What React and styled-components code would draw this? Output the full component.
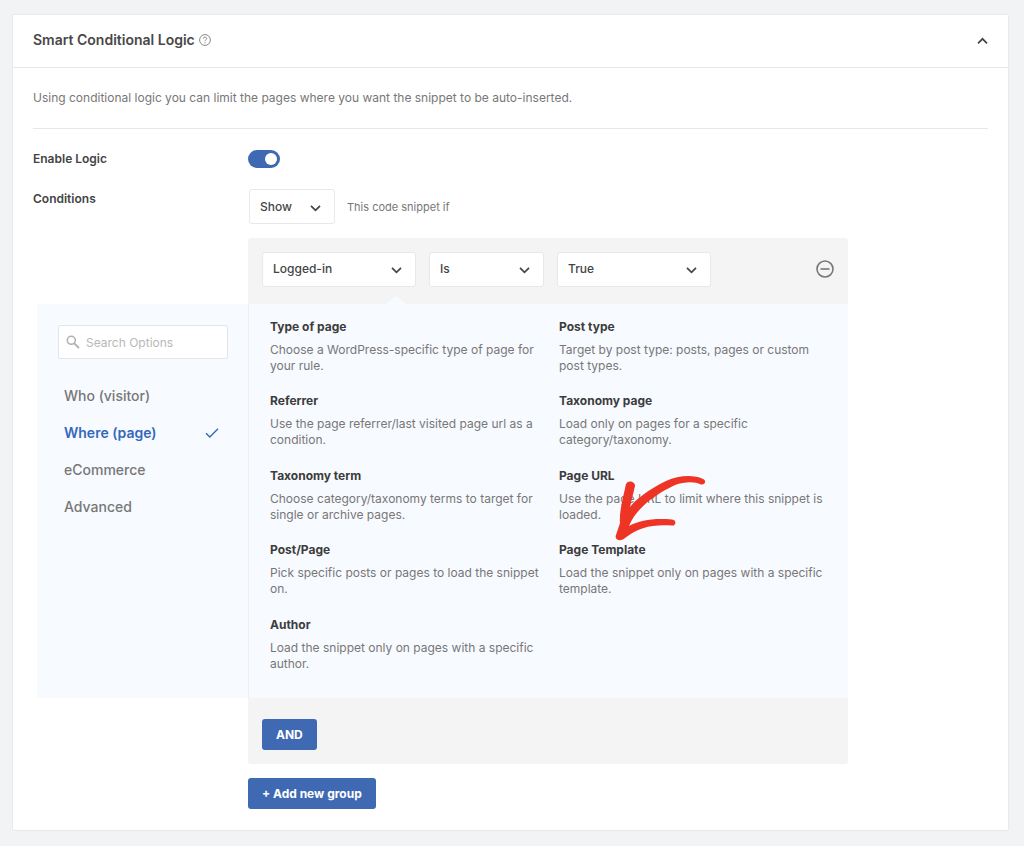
import React, { useState } from 'react'
import styled, { createGlobalStyle } from 'styled-components'

const GlobalStyle = createGlobalStyle`
  * {
    box-sizing: border-box;
  }
  body {
    margin: 0;
    background-color: #f1f3f5;
    font-family: Inter, 'Liberation Sans', sans-serif;
    font-size: 12px;
    color: #777;
  }
  button,
  input,
  select {
    font-family: inherit;
    margin: 0;
  }
`
const Page = styled.main`
  padding: 14px 15px 15px 12px;
`
const Card = styled.section`
  background-color: white;
  border: 1px solid #e7e9eb;
  border-radius: 2px;
`
const CardHeader = styled.header`
  display: flex;
  align-items: center;
  justify-content: space-between;
  height: 53px;
  padding: 0 20px;
  border-bottom: 1px solid #e6e8ea;
`
const TitleWrap = styled.div`
  display: flex;
  align-items: center;
  gap: 4px;
  padding-bottom: 2px;
`
const Title = styled.h2`
  margin: 0;
  font-size: 14px;
  line-height: 20px;
  font-weight: 600;
  color: #484848;
`
const IconButton = styled.button`
  display: flex;
  padding: 0;
  border: none;
  background: none;
  color: ${(props) => props.$color || '#444'};
  cursor: pointer;
`
const CardBody = styled.div`
  padding: 20px 20px 21px;
`
const Intro = styled.p`
  margin: 0 0 20px;
  padding-bottom: 20px;
  line-height: 20px;
  border-bottom: 1px solid #e6e8ea;
`
const SettingsGrid = styled.div`
  display: grid;
  grid-template-columns: 215px minmax(0, 600px);
`
const Label = styled.label`
  line-height: 20px;
  font-weight: 600;
  color: #444;
`
const ToggleCell = styled.div`
  display: flex;
  align-items: center;
  height: 20px;
  margin-bottom: 20px;
`
const Toggle = styled.input`
  appearance: none;
  display: flex;
  width: 32px;
  height: 18px;
  padding: 3px;
  border-radius: 9px;
  background-color: ${(props) => (props.checked ? '#3f6ab3' : '#bbb')};
  justify-content: ${(props) => (props.checked ? 'flex-end' : 'flex-start')};
  cursor: pointer;
  &::before {
    content: '';
    width: 12px;
    height: 12px;
    border-radius: 50%;
    background-color: white;
  }
`
const ShowRow = styled.div`
  display: flex;
  align-items: center;
  gap: 12px;
  margin-bottom: 14px;
  padding-left: 1px;
`
const ShowText = styled.span`
  font-size: 11px;
`
const SelectWrap = styled.div`
  display: grid;
  align-items: center;
  width: ${(props) => props.$width};
  color: #444;
`
const NativeSelect = styled.select`
  appearance: none;
  grid-area: 1 / 1;
  width: 100%;
  height: 35px;
  padding: 0 30px 1px 10px;
  border: 1px solid #e6e8ea;
  border-radius: 3px;
  background-color: white;
  font-size: 12px;
  font-weight: 500;
  color: #444;
`
const SelectIcon = styled.span`
  grid-area: 1 / 1;
  justify-self: end;
  display: flex;
  margin-right: 14px;
  padding-top: 2px;
  pointer-events: none;
`
const RuleRow = styled.div`
  grid-column: 2;
  display: flex;
  align-items: center;
  gap: 13px;
  height: 66px;
  padding: 0 14px;
  padding-bottom: 4px;
  border-radius: 3px 3px 0 0;
  background-color: #f4f4f4;
`
const RemoveButton = styled(IconButton)`
  margin-left: auto;
`
const Categories = styled.nav`
  grid-column: 1;
  margin-left: 4px;
  padding: 21px 20px 0 21px;
  background-color: #f7faff;
`
const SearchBox = styled.div`
  display: flex;
  align-items: center;
  gap: 6px;
  height: 34px;
  margin-bottom: 18px;
  padding: 0 7px;
  border: 1px solid #e2e5e9;
  border-radius: 2px;
  background-color: white;
  color: #b0b0b0;
`
const SearchInput = styled.input`
  flex: 1;
  min-width: 0;
  padding: 0;
  border: none;
  outline: none;
  background: none;
  font-size: 12px;
  color: #444;
  &::placeholder {
    color: #b8b8b8;
  }
`
const CategoryButton = styled.button`
  display: flex;
  align-items: center;
  justify-content: space-between;
  width: 100%;
  height: 37px;
  padding: 0 9px 0 6px;
  border: none;
  background: none;
  font-size: 14px;
  font-weight: ${(props) => (props.$active ? 600 : 500)};
  color: ${(props) => (props.$active ? '#3568bd' : '#777')};
  cursor: pointer;
`
const Options = styled.ul`
  position: relative;
  grid-column: 2;
  display: grid;
  grid-template-columns: 1fr 1fr;
  grid-auto-rows: 1fr;
  column-gap: 20px;
  min-height: 394px;
  margin: 0;
  padding: 14px 20px 8px 21px;
  list-style: none;
  border-left: 1px solid #eceff4;
  background-color: #f7faff;
  &::before {
    content: '';
    position: absolute;
    top: -8px;
    left: 137px;
    border: solid transparent;
    border-width: 0 10px 8px;
    border-bottom-color: #f7faff;
  }
`
const Option = styled.li`
  position: relative;
`
const OptionTitle = styled.h3`
  margin: 0 0 6px;
  font-size: 12px;
  line-height: 18px;
  font-weight: 700;
  color: #3c3c3c;
`
const OptionText = styled.p`
  margin: 0;
  line-height: 16px;
`
const ArrowMark = styled.svg`
  position: absolute;
  top: -73px;
  left: 49px;
  pointer-events: none;
`
const GroupFooter = styled.div`
  grid-column: 2;
  display: flex;
  align-items: center;
  height: 66px;
  margin-bottom: 14px;
  padding: 0 14px;
  padding-top: 6px;
  border-radius: 0 0 3px 3px;
  background-color: #f4f4f4;
`
const AddCell = styled.div`
  grid-column: 2;
`
const PrimaryButton = styled.button`
  height: 31px;
  padding: 0 14px;
  border: none;
  border-radius: 3px;
  background-color: #3f6ab3;
  font-size: 12px;
  font-weight: 700;
  color: white;
  cursor: pointer;
`

const categories = ['Who (visitor)', 'Where (page)', 'eCommerce', 'Advanced']

const options = [
  {
    title: 'Type of page',
    text: 'Choose a WordPress-specific type of page for your rule.',
  },
  {
    title: 'Post type',
    text: 'Target by post type: posts, pages or custom post types.',
  },
  {
    title: 'Referrer',
    text: 'Use the page referrer/last visited page url as a condition.',
  },
  {
    title: 'Taxonomy page',
    text: 'Load only on pages for a specific category/taxonomy.',
  },
  {
    title: 'Taxonomy term',
    text: 'Choose category/taxonomy terms to target for single or archive pages.',
  },
  {
    title: 'Page URL',
    text: 'Use the page URL to limit where this snippet is loaded.',
  },
  {
    title: 'Post/Page',
    text: 'Pick specific posts or pages to load the snippet on.',
  },
  {
    title: 'Page Template',
    text: 'Load the snippet only on pages with a specific template.',
    marked: true,
  },
  {
    title: 'Author',
    text: 'Load the snippet only on pages with a specific author.',
  },
]

function Chevron({ up }) {
  return (
    <svg width='11' height='8' viewBox='0 0 11 8' fill='none'>
      <path
        d={up ? 'M1 6.3 5.5 1.8 10 6.3' : 'M1 1.8 5.5 6.3 10 1.8'}
        stroke='currentColor'
        strokeWidth='1.7'
      />
    </svg>
  )
}

function Select({ label, id, width, choices }) {
  return (
    <SelectWrap $width={width}>
      <NativeSelect id={id} aria-label={label}>
        {choices.map((choice) => (
          <option key={choice}>{choice}</option>
        ))}
      </NativeSelect>
      <SelectIcon>
        <Chevron />
      </SelectIcon>
    </SelectWrap>
  )
}

function Arrow() {
  return (
    <ArrowMark width='104' height='80' viewBox='0 0 104 80' fill='#ee3424'>
      <path d='M18 16C20 12 27 13 27 18L22 39C28 31 40 22 58 13C70 8 84 6 95 11C99 13 97 17 93 16.500C86 13 76 14 67 17C48 26 28 40 21 58C32 52 46 50 64 51.500C69 52 68 58 64 57.500C46 56 30 59 17 70C13 74 6 72 8 67L12 55C11 44 15 30 18 16Z' />
    </ArrowMark>
  )
}

function App() {
  const [enabled, setEnabled] = useState(true)
  const [category, setCategory] = useState('Where (page)')
  const [search, setSearch] = useState('')

  return (
    <Page>
      <GlobalStyle />
      <Card>
        <CardHeader>
          <TitleWrap>
            <Title>Smart Conditional Logic</Title>
            <IconButton $color='#888' aria-label='Help'>
              <svg width='12' height='12' viewBox='0 0 12 12' fill='none'>
                <circle cx='6' cy='6' r='5.4' stroke='currentColor' />
                <path
                  d='M4.3 4.8C4.3 2.6 7.7 2.7 7.7 4.6C7.7 5.8 6 5.8 6 7.2M6 8.2V9.3'
                  stroke='currentColor'
                />
              </svg>
            </IconButton>
          </TitleWrap>
          <IconButton aria-label='Collapse'>
            <Chevron up />
          </IconButton>
        </CardHeader>
        <CardBody>
          <Intro>
            Using conditional logic you can limit the pages where you want the
            snippet to be auto-inserted.
          </Intro>
          <SettingsGrid>
            <Label htmlFor='enable-logic'>Enable Logic</Label>
            <ToggleCell>
              <Toggle
                id='enable-logic'
                type='checkbox'
                checked={enabled}
                onChange={() => setEnabled(!enabled)}
              />
            </ToggleCell>
            <Label htmlFor='show-hide'>Conditions</Label>
            <ShowRow>
              <Select id='show-hide' width='86px' choices={['Show', 'Hide']} />
              <ShowText>This code snippet if</ShowText>
            </ShowRow>
            <RuleRow>
              <Select
                label='Condition'
                width='154px'
                choices={['Logged-in', 'User Role']}
              />
              <Select
                label='Relation'
                width='115px'
                choices={['Is', 'Is not']}
              />
              <Select
                label='Value'
                width='154px'
                choices={['True', 'False']}
              />
              <RemoveButton $color='#777' aria-label='Remove condition'>
                <svg width='18' height='18' viewBox='0 0 18 18' fill='none'>
                  <circle
                    cx='9'
                    cy='9'
                    r='8'
                    stroke='currentColor'
                    strokeWidth='1.6'
                  />
                  <path d='M4.5 9H13.5' stroke='currentColor' strokeWidth='1.6' />
                </svg>
              </RemoveButton>
            </RuleRow>
            <Categories>
              <SearchBox>
                <svg width='14' height='14' viewBox='0 0 14 14' fill='none'>
                  <circle
                    cx='5.3'
                    cy='5.3'
                    r='4'
                    stroke='currentColor'
                    strokeWidth='1.6'
                  />
                  <path
                    d='M8.3 8.3 13 13'
                    stroke='currentColor'
                    strokeWidth='1.8'
                  />
                </svg>
                <SearchInput
                  type='text'
                  aria-label='Search Options'
                  placeholder='Search Options'
                  value={search}
                  onChange={(e) => setSearch(e.target.value)}
                />
              </SearchBox>
              {categories.map((name) => (
                <CategoryButton
                  key={name}
                  $active={name === category}
                  onClick={() => setCategory(name)}
                >
                  {name}
                  {name === category && (
                    <svg width='14' height='10' viewBox='0 0 14 10' fill='none'>
                      <path
                        d='M1 5.2 4.8 9 13 .8'
                        stroke='currentColor'
                        strokeWidth='1.4'
                      />
                    </svg>
                  )}
                </CategoryButton>
              ))}
            </Categories>
            <Options>
              {options.map((option) => (
                <Option key={option.title}>
                  <OptionTitle>{option.title}</OptionTitle>
                  <OptionText>{option.text}</OptionText>
                  {option.marked && <Arrow />}
                </Option>
              ))}
            </Options>
            <GroupFooter>
              <PrimaryButton>AND</PrimaryButton>
            </GroupFooter>
            <AddCell>
              <PrimaryButton>+ Add new group</PrimaryButton>
            </AddCell>
          </SettingsGrid>
        </CardBody>
      </Card>
    </Page>
  )
}

export default App
